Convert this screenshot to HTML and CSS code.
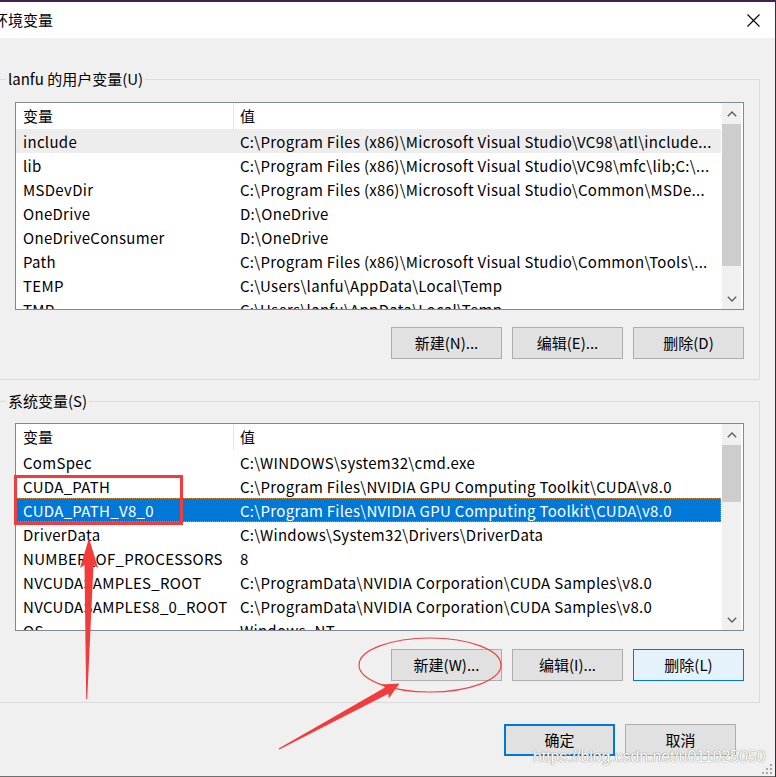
FILE: index.html
```html
<!DOCTYPE html>
<html lang="zh-CN">
<head>
<meta charset="utf-8">
<title>环境变量</title>
<link rel="stylesheet" href="styles.css">
</head>
<body>
<div class="window">
  <div class="titlebar">
    <span class="title">环境变量</span>
    <svg class="close" width="13" height="13" viewBox="0 0 13 13"><path d="M0.5 0.5 L12.5 12.5 M12.5 0.5 L0.5 12.5" stroke="#000" stroke-width="1.1" fill="none"/></svg>
  </div>
  <div class="content">
    <fieldset class="group g1">
      <legend>lanfu 的用户变量(U)</legend>
      <div class="list">
        <div class="table">
          <div class="row head"><div class="c1">变量</div><div class="c2">值</div></div>
          <div class="row hover"><div class="c1">include</div><div class="c2">C:\Program Files (x86)\Microsoft Visual Studio\VC98\atl\include...</div></div>
          <div class="row"><div class="c1">lib</div><div class="c2">C:\Program Files (x86)\Microsoft Visual Studio\VC98\mfc\lib;C:\...</div></div>
          <div class="row"><div class="c1">MSDevDir</div><div class="c2">C:\Program Files (x86)\Microsoft Visual Studio\Common\MSDe...</div></div>
          <div class="row"><div class="c1">OneDrive</div><div class="c2">D:\OneDrive</div></div>
          <div class="row"><div class="c1">OneDriveConsumer</div><div class="c2">D:\OneDrive</div></div>
          <div class="row"><div class="c1">Path</div><div class="c2">C:\Program Files (x86)\Microsoft Visual Studio\Common\Tools\...</div></div>
          <div class="row"><div class="c1">TEMP</div><div class="c2">C:\Users\lanfu\AppData\Local\Temp</div></div>
          <div class="row"><div class="c1">TMP</div><div class="c2">C:\Users\lanfu\AppData\Local\Temp</div></div>
        </div>
        <div class="scrollbar">
          <div class="sb-btn"><svg width="10" height="6" viewBox="0 0 10 6"><path d="M0.8 5.2 L5 1 L9.2 5.2" stroke="#606060" stroke-width="1.4" fill="none"/></svg></div>
          <div class="track"><div class="thumb" style="height:142px"></div></div>
          <div class="sb-btn"><svg width="10" height="6" viewBox="0 0 10 6"><path d="M0.8 0.8 L5 5 L9.2 0.8" stroke="#606060" stroke-width="1.4" fill="none"/></svg></div>
        </div>
      </div>
      <div class="buttons">
        <button class="btn">新建(N)...</button>
        <button class="btn">编辑(E)...</button>
        <button class="btn">删除(D)</button>
      </div>
    </fieldset>

    <fieldset class="group g2">
      <legend>系统变量(S)</legend>
      <div class="list">
        <div class="table">
          <div class="row head"><div class="c1">变量</div><div class="c2">值</div></div>
          <div class="row"><div class="c1">ComSpec</div><div class="c2">C:\WINDOWS\system32\cmd.exe</div></div>
          <div class="row"><div class="c1">CUDA_PATH</div><div class="c2">C:\Program Files\NVIDIA GPU Computing Toolkit\CUDA\v8.0</div></div>
          <div class="row selected"><div class="c1">CUDA_PATH_V8_0</div><div class="c2">C:\Program Files\NVIDIA GPU Computing Toolkit\CUDA\v8.0</div></div>
          <div class="row"><div class="c1">DriverData</div><div class="c2">C:\Windows\System32\Drivers\DriverData</div></div>
          <div class="row"><div class="c1">NUMBER_OF_PROCESSORS</div><div class="c2">8</div></div>
          <div class="row"><div class="c1">NVCUDASAMPLES_ROOT</div><div class="c2">C:\ProgramData\NVIDIA Corporation\CUDA Samples\v8.0</div></div>
          <div class="row"><div class="c1">NVCUDASAMPLES8_0_ROOT</div><div class="c2">C:\ProgramData\NVIDIA Corporation\CUDA Samples\v8.0</div></div>
          <div class="row"><div class="c1">OS</div><div class="c2">Windows_NT</div></div>
        </div>
        <div class="scrollbar">
          <div class="sb-btn"><svg width="10" height="6" viewBox="0 0 10 6"><path d="M0.8 5.2 L5 1 L9.2 5.2" stroke="#606060" stroke-width="1.4" fill="none"/></svg></div>
          <div class="track"><div class="thumb" style="height:57px"></div></div>
          <div class="sb-btn"><svg width="10" height="6" viewBox="0 0 10 6"><path d="M0.8 0.8 L5 5 L9.2 0.8" stroke="#606060" stroke-width="1.4" fill="none"/></svg></div>
        </div>
      </div>
      <div class="buttons">
        <button class="btn">新建(W)...</button>
        <button class="btn">编辑(I)...</button>
        <button class="btn btn-hot">删除(L)</button>
      </div>
    </fieldset>

    <div class="footer">
      <button class="btn btn-default">确定</button>
      <button class="btn">取消</button>
    </div>
  </div>

  <div class="watermark">https://blog.csdn.net/u011025050</div>
  <svg class="grip" width="12" height="12" viewBox="0 0 12 12">
    <rect x="9" y="1" width="2" height="2" fill="#a8a8a8"/>
    <rect x="5" y="5" width="2" height="2" fill="#a8a8a8"/>
    <rect x="9" y="5" width="2" height="2" fill="#a8a8a8"/>
    <rect x="1" y="9" width="2" height="2" fill="#a8a8a8"/>
    <rect x="5" y="9" width="2" height="2" fill="#a8a8a8"/>
    <rect x="9" y="9" width="2" height="2" fill="#a8a8a8"/>
  </svg>

  <svg class="annotations" width="776" height="777" viewBox="0 0 776 777">
    <rect x="15.5" y="476.5" width="166" height="47" fill="none" stroke="#f23b3b" stroke-width="3"/>
    <polygon points="89,538 98,568 93.5,565 87.2,699 86.2,699 84.5,565 80,568" fill="#f23b3b"/>
    <polygon points="399.5,683.5 388.7,698.6 388.4,693.8 279.3,749.5 278.7,748.5 385,687.6 381.1,684.6" fill="#f23b3b"/>
    <ellipse cx="430" cy="665" rx="71" ry="27" fill="none" stroke="#e94545" stroke-width="1.2"/>
  </svg>
</div>
</body>
</html>
```

FILE: styles.css
```css
* {
  box-sizing: border-box;
}

body {
  margin: 0;
  background: #3a2a44;
  font-family: "Noto Sans CJK SC", "Noto Sans", sans-serif;
  font-size: 15px;
  color: #000;
}

.window {
  position: relative;
  width: 775px;
  background: #f0f0f0;
  border-bottom: 1px solid #6e6e6e;
  overflow: hidden;
}

.titlebar {
  height: 38px;
  border-top: 2px solid #40214f;
  background: #fff;
  display: flex;
  align-items: center;
  justify-content: space-between;
  padding-right: 15px;
}

.title {
  margin-left: -7px;
  line-height: 20px;
}

.close {
  display: block;
}

.content {
  display: flex;
  flex-direction: column;
  padding-bottom: 20px;
}

.group {
  margin: 0 0 0 -4px;
  width: 764px;
  min-width: 0;
  padding: 0 0 20px 0;
  border: 1px solid #dcdcdc;
}

.g1 {
  margin-top: 31px;
}

.g2 {
  margin-top: 11px;
  padding-bottom: 21px;
}

.group legend {
  margin-left: 9px;
  padding: 0 2px;
  line-height: 20px;
  height: 20px;
}

.list {
  display: flex;
  width: 729px;
  height: 208px;
  margin: 13px 0 0 18px;
  border: 1px solid #828790;
  background: #fff;
}

.g2 .list {
  margin-top: 12px;
}

.table {
  flex: 1;
  min-width: 0;
  overflow: hidden;
}

.row {
  display: flex;
  height: 24px;
  line-height: 25px;
  white-space: nowrap;
  letter-spacing: 0.3px;
}

.row.head {
  height: 26px;
  line-height: 26px;
  letter-spacing: 0;
}

.c1 {
  width: 217px;
  flex: none;
  padding-left: 7px;
  overflow: hidden;
}

.c2 {
  flex: 1;
  min-width: 0;
  padding-left: 6px;
  overflow: hidden;
}

.head .c2 {
  border-left: 1px solid #e5e5e5;
}

.row:not(.head) .c2 {
  margin-left: 1px;
}

.row.hover {
  background: #ededed;
}

.row.selected {
  background: #0078d7;
  color: #fff;
  outline: 1px dotted #d08a3c;
  outline-offset: -1px;
}

.scrollbar {
  width: 19px;
  flex: none;
  margin: 0 2px 0 1px;
  background: #f0f0f0;
  display: flex;
  flex-direction: column;
}

.sb-btn {
  height: 21px;
  flex: none;
  display: flex;
  align-items: center;
  justify-content: center;
}

.sb-btn svg {
  display: block;
}

.track {
  flex: 1;
}

.thumb {
  background: #cdcdcd;
}

.buttons {
  display: flex;
  justify-content: flex-end;
  gap: 10px;
  width: 729px;
  margin: 17px 0 0 18px;
}

.g2 .buttons {
  margin-top: 18px;
}

.btn {
  width: 111px;
  height: 32px;
  padding: 0;
  font-family: inherit;
  font-size: 15px;
  color: #000;
  background: #e1e1e1;
  border: 1px solid #adadad;
  line-height: 30px;
}

.btn-hot {
  background: #e5f1fb;
  border-color: #0078d7;
}

.btn-default {
  border: 2px solid #0078d7;
  line-height: 28px;
}

.footer {
  display: flex;
  justify-content: flex-end;
  gap: 10px;
  margin-top: 21px;
  padding-right: 39px;
}

.watermark {
  position: absolute;
  left: 533px;
  top: 746px;
  font-family: "Liberation Sans", Arial, sans-serif;
  font-size: 15.8px;
  line-height: 22px;
  color: #ffffff;
  text-shadow: 0 0 1px #8c8c8c, 0 0 1px #8c8c8c;
  white-space: nowrap;
}

.grip {
  position: absolute;
  right: 2px;
  bottom: 1px;
  display: block;
}

.annotations {
  position: absolute;
  left: 0;
  top: 0;
  pointer-events: none;
}
```
